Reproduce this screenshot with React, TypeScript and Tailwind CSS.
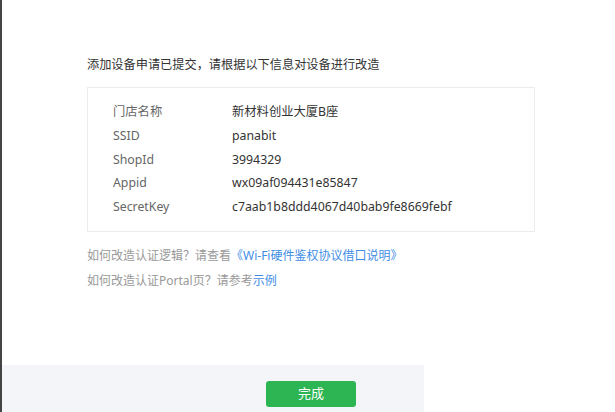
import React from "react";

const rows: [string, string][] = [
  ["门店名称", "新材料创业大厦B座"],
  ["SSID", "panabit"],
  ["ShopId", "3994329"],
  ["Appid", "wx09af094431e85847"],
  ["SecretKey", "c7aab1b8ddd4067d40bab9fe8669febf"],
];

export default function App() {
  return (
    <div
      className="relative h-[412px] w-[615px] overflow-hidden border-l-2 border-[#444] bg-white text-[12px]"
      style={{ fontFamily: '"Noto Sans", "Noto Sans CJK SC", sans-serif' }}
    >
      <div className="pl-[85px] pt-[55px]">
        <p className="text-[12.2px] leading-[20px] text-[#333]">添加设备申请已提交，请根据以下信息对设备进行改造</p>

        {/* device info */}
        <div className="mt-[12px] w-[448px] border border-[#ececec] pb-[12px] pl-[25px] pt-[12px] text-[12.3px]">
          {rows.map(([label, value]) => (
            <div key={label} className="flex leading-[23.75px]">
              <span className="w-[119px] text-[#666]">{label}</span>
              <span className="text-[#333]">{value}</span>
            </div>
          ))}
        </div>

        <div className="mt-[11px] text-[#999]">
          <p className="leading-[25px]">
            如何改造认证逻辑？请查看
            <a className="text-[#3f8ee6]">《Wi-Fi硬件鉴权协议借口说明》</a>
          </p>
          <p className="leading-[25px]">
            如何改造认证Portal页？请参考<a className="text-[#3f8ee6]">示例</a>
          </p>
        </div>
      </div>

      {/* footer */}
      <div className="absolute left-0 top-[365px] h-[60px] w-[422px] bg-[#f4f5f9] pl-[264px] pt-[16px]">
        <button className="h-[26px] w-[90px] rounded-[3px] bg-[#2db553] text-[13px] text-white">完成</button>
      </div>
    </div>
  );
}
